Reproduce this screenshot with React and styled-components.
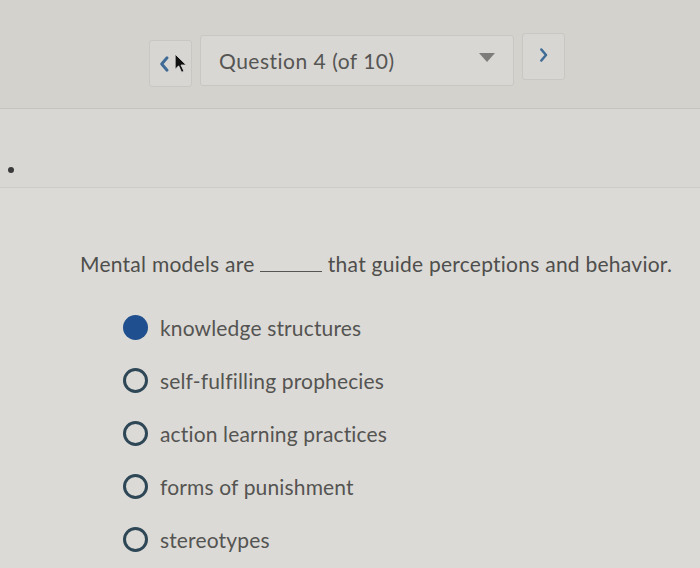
import styled, { createGlobalStyle } from 'styled-components';

const options = [
  'knowledge structures',
  'self-fulfilling prophecies',
  'action learning practices',
  'forms of punishment',
  'stereotypes',
];

function App() {
  return (
    <>
      <GlobalStyle />
      <Page>
        <Header>
          <Nav>
            <NavButton>
              <Chevron viewBox="0 0 12 18" $size={16}>
                <path d="M9 2 L3 9 L9 16" />
              </Chevron>
              <Cursor viewBox="0 0 12 18">
                <path d="M1 1 L1 14 L4 11 L6.5 16.5 L8.5 15.6 L6 10.3 L10.5 10.3 Z" fill="#111" stroke="#ddd" strokeWidth="0.7" />
              </Cursor>
            </NavButton>
            <Select>
              <span>Question 4 (of 10)</span>
              <Caret />
            </Select>
            <NavButton $raised>
              <Chevron viewBox="0 0 12 18" $size={14}>
                <path d="M3 2 L9 9 L3 16" />
              </Chevron>
            </NavButton>
          </Nav>
        </Header>
        <Band>
          <Dot />
        </Band>
        <Content>
          <Prompt>
            Mental models are <Blank /> that guide perceptions and behavior.
          </Prompt>
          <Choices>
            {options.map((text, i) => (
              <Choice key={text}>
                <Radio $checked={i === 0} />
                <ChoiceText>{text}</ChoiceText>
              </Choice>
            ))}
          </Choices>
        </Content>
      </Page>
    </>
  );
}

const GlobalStyle = createGlobalStyle`
  html, body {
    margin: 0;
    background: #dbd9d5;
  }
  body {
    font-family: Lato, "Open Sans", "Liberation Sans", sans-serif;
  }
`;

const Page = styled.div`
  width: 700px;
  height: 568px;
  overflow: hidden;
  display: flex;
  flex-direction: column;
`;

const Header = styled.div`
  height: 109px;
  background: #d4d2cd;
  border-bottom: 1px solid #c6c4bf;
  display: flex;
  align-items: flex-start;
  padding-left: 149px;
  box-sizing: border-box;
`;

const Nav = styled.div`
  display: flex;
  align-items: flex-start;
  gap: 8px;
  margin-top: 35px;
`;

const NavButton = styled.div`
  position: relative;
  width: 43px;
  height: 47px;
  margin-top: ${(p) => (p.$raised ? '-2px' : '5px')};
  border: 1px solid #c9c7c3;
  border-radius: 3px;
  background: #d8d6d2;
  display: flex;
  align-items: center;
  justify-content: center;
  box-sizing: border-box;
`;

const Chevron = styled.svg`
  width: ${(p) => p.$size * 0.67}px;
  height: ${(p) => p.$size}px;
  margin-left: ${(p) => (p.$size > 14 ? '-12px' : '0')};
  margin-top: ${(p) => (p.$size > 14 ? '0' : '-4px')};
  fill: none;
  stroke: #3d6b96;
  stroke-width: 3.2;
  stroke-linecap: round;
  stroke-linejoin: round;
`;

const Cursor = styled.svg`
  position: absolute;
  left: 24px;
  top: 12px;
  width: 14px;
  height: 21px;
`;

const Select = styled.div`
  width: 314px;
  height: 51px;
  border: 1px solid #c9c7c3;
  border-radius: 3px;
  background: #d9d7d3;
  display: flex;
  align-items: center;
  justify-content: space-between;
  padding: 0 18px 0 18px;
  box-sizing: border-box;
  color: #555553;
  font-size: 21px;
  letter-spacing: 0.5px;
`;

const Caret = styled.span`
  width: 0;
  height: 0;
  border-left: 8px solid transparent;
  border-right: 8px solid transparent;
  border-top: 9px solid #7d7c7a;
  margin-top: -6px;
`;

const Band = styled.div`
  height: 79px;
  border-bottom: 1px solid #cdcbc6;
  background: #d9d7d3;
  position: relative;
  box-sizing: border-box;
`;

const Dot = styled.span`
  position: absolute;
  left: 8px;
  top: 58px;
  width: 6px;
  height: 6px;
  border-radius: 50%;
  background: #3a3a3a;
`;

const Content = styled.div`
  flex: 1;
  padding: 63px 0 0 80px;
  background: #dcdad6;
`;

const Prompt = styled.div`
  color: #4e4e4c;
  font-size: 21px;
  line-height: 25px;
  letter-spacing: 0.25px;
  white-space: nowrap;
`;

const Blank = styled.span`
  display: inline-block;
  width: 62px;
  border-bottom: 1px solid #555;
  vertical-align: baseline;
`;

const Choices = styled.div`
  display: flex;
  flex-direction: column;
  gap: 27px;
  margin-top: 38px;
  padding-left: 43px;
`;

const Choice = styled.div`
  display: flex;
  align-items: center;
  gap: 12px;
  height: 26px;
`;

const Radio = styled.span`
  width: 25px;
  height: 25px;
  border-radius: 50%;
  box-sizing: border-box;
  border: ${(p) => (p.$checked ? 'none' : '3px solid #2e4757')};
  background: ${(p) => (p.$checked ? '#1f4f8e' : 'transparent')};
  flex-shrink: 0;
`;

const ChoiceText = styled.span`
  color: #545452;
  font-size: 21px;
  letter-spacing: 0.15px;
`;

export default App;
